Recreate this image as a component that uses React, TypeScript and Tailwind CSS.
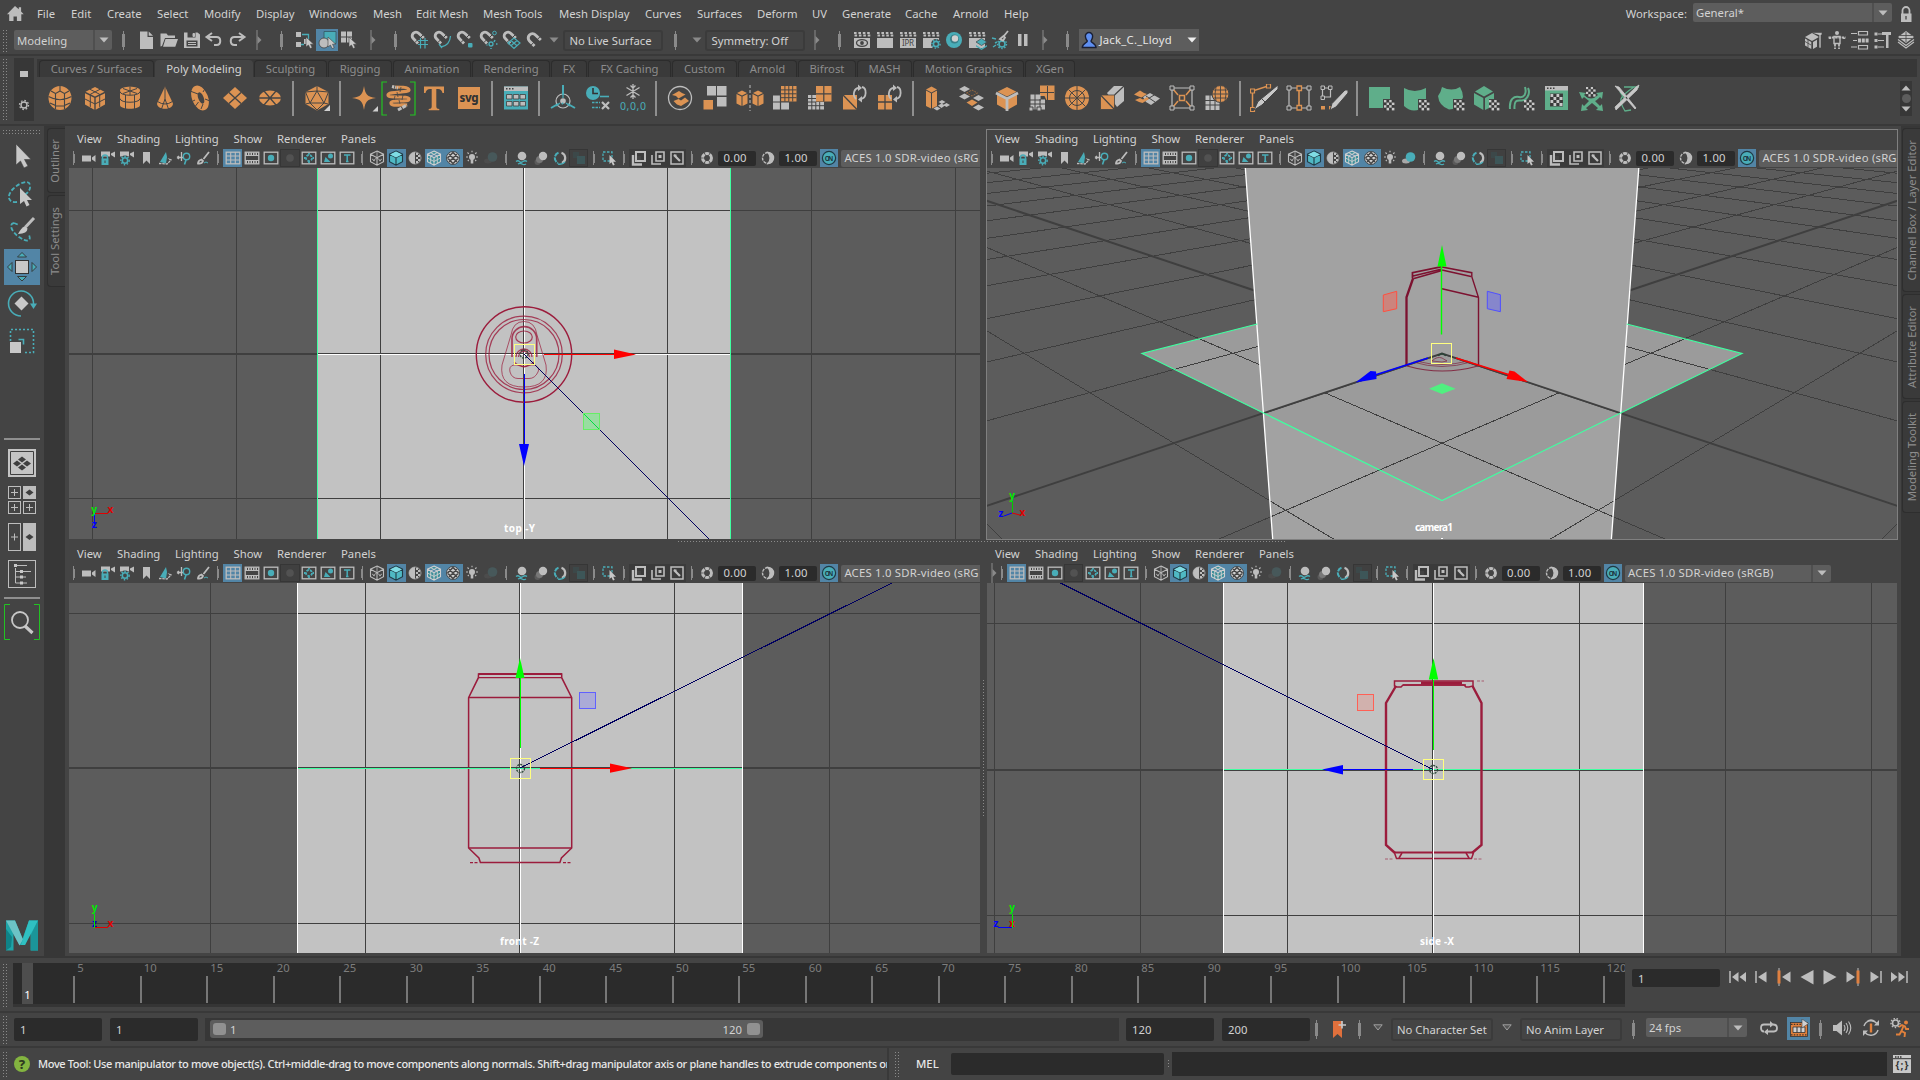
import React from "react";

const W = "#bdbdbd";
const T = "#49adb8";
const O = "#dc9353";
const G = "#5fae8a";
const D = "#444444";
const DK = "#3f3f3f";

type K = { children?: React.ReactNode };

/* ---------- icon frames ---------- */
const I16 = ({ children }: K) => (
  <svg width="16" height="16" viewBox="0 0 16 16" fill="none" className="shrink-0">
    {children}
  </svg>
);
const I20 = ({ children }: K) => (
  <svg width="20" height="20" viewBox="0 0 20 20" fill="none" className="shrink-0">
    {children}
  </svg>
);
const I28 = ({ children }: K) => (
  <svg width="28" height="28" viewBox="0 0 28 28" fill="none" className="shrink-0">
    {children}
  </svg>
);
const I36 = ({ children }: K) => (
  <svg width="36" height="36" viewBox="0 0 36 36" fill="none" className="shrink-0">
    {children}
  </svg>
);

const Checker = ({ x, y, s = 2.6 }: { x: number; y: number; s?: number }) => (
  <>
    {[0, 1, 2, 3].flatMap((r) =>
      [0, 1, 2, 3].map((c) => (
        <rect key={r * 4 + c} x={x + c * s} y={y + r * s} width={s} height={s} fill={(r + c) % 2 ? "#3a3a3a" : "#c8c8c8"} />
      ))
    )}
  </>
);

const GearShape = ({ cx, cy, r, c }: { cx: number; cy: number; r: number; c: string }) => (
  <>
    <circle cx={cx} cy={cy} r={r} stroke={c} strokeWidth={1.6} />
    <circle cx={cx} cy={cy} r={r + 1.5} stroke={c} strokeWidth={1.4} strokeDasharray="1.5 1.6" />
  </>
);

/* ---------- small chrome pieces ---------- */
const Grip = ({ h }: { h: string }) => (
  <div className={"w-[5px] shrink-0 bg-[radial-gradient(circle,#8a8a8a_0.6px,transparent_0.9px)] bg-[length:3px_3px] " + h} />
);
const Sep = ({ w }: { w: string }) => (
  <div className={"relative flex shrink-0 items-center justify-center " + w}>
    <div className="h-[19px] w-px bg-[#8a8a8a]" />
    <div className="absolute h-[13px] w-[3px] bg-[#8a8a8a]" />
  </div>
);
const BarArrow = ({ w }: { w: string }) => (
  <div className={"flex shrink-0 items-center justify-center " + w}>
    <svg width="6" height="20" viewBox="0 0 6 20">
      <path d="M1 0v20" stroke="#8a8a8a" strokeWidth="1" />
      <path d="M1.5 6l4 4-4 4z" fill="#8a8a8a" />
    </svg>
  </div>
);
const Tri = ({ c = "#8a8a8a" }: { c?: string }) => (
  <svg width="10" height="6" viewBox="0 0 10 6">
    <path d="M0.5 0.5h9L5 5.5z" fill={c} />
  </svg>
);

/* ---------- menu bar ---------- */
const menus: [string, string][] = [
  ["File", "w-[34px]"],
  ["Edit", "w-[36px]"],
  ["Create", "w-[50px]"],
  ["Select", "w-[47px]"],
  ["Modify", "w-[52px]"],
  ["Display", "w-[53px]"],
  ["Windows", "w-[64px]"],
  ["Mesh", "w-[43px]"],
  ["Edit Mesh", "w-[67px]"],
  ["Mesh Tools", "w-[76px]"],
  ["Mesh Display", "w-[86px]"],
  ["Curves", "w-[52px]"],
  ["Surfaces", "w-[60px]"],
  ["Deform", "w-[55px]"],
  ["UV", "w-[30px]"],
  ["Generate", "w-[63px]"],
  ["Cache", "w-[48px]"],
  ["Arnold", "w-[51px]"],
  ["Help", "w-[40px]"],
];

const MenuBar = () => (
  <div className="flex h-[27px] items-center text-[#d2d2d2]">
    <div className="w-[37px] pl-[6px]">
      <svg width="19" height="17" viewBox="0 0 19 17">
        <path d="M9 1L1 9.2h2.2V16H7.5v-4.6h3.4V16h4.4V9.2h2.4l-2.6-2.7V2.2h-2.3v2z" fill={W} />
      </svg>
    </div>
    {menus.map(([m, w]) => (
      <div key={m} className={"shrink-0 " + w}>
        {m}
      </div>
    ))}
    <div className="ml-auto flex items-center">
      <span className="mr-[6px]">Workspace:</span>
      <div className="mt-[-2px] flex h-[19px] w-[199px] items-center rounded-[2px] bg-[#5d5d5d]">
        <span className="flex-1 pl-[3px]">General*</span>
        <div className="flex h-full w-[20px] items-center justify-center border-l-2 border-[#4f4f4f]">
          <Tri c={W} />
        </div>
      </div>
      <svg width="28" height="18" viewBox="0 0 28 18" fill="none">
        <path d="M10.5 9V5.5a3.5 3.5 0 0 1 7 0V9" stroke={W} strokeWidth="1.8" />
        <rect x="9" y="8.500" width="10.500" height="8.500" fill={W} />
        <path d="M14 11v3.5" stroke={D} strokeWidth="1.3" />
      </svg>
    </div>
  </div>
);

/* ---------- status line ---------- */
const Magnet = () => (
  <>
    <path d="M9 13.500L4.300 8.600a3.800 3.800 0 0 1 5.400-5.400L14.800 8" stroke={W} strokeWidth="2.900" />
    <path d="M5.700 12.700l3-3M11.200 7.800l3-3" stroke={D} strokeWidth="1" />
  </>
);
const Clap = () => (
  <>
    <rect x="2" y="8" width="16" height="10" fill={W} />
    <path d="M2 3h16M2.5 5.5h16" stroke={W} strokeWidth="1.8" strokeDasharray="2.6 1.8" />
  </>
);
const Cursor = ({ x, y }: { x: number; y: number }) => (
  <path d={`M${x} ${y}v10l2.4-2 1.800 3.600 2-1-1.700-3.400h3.200z`} fill="#c8c8c8" stroke={D} strokeWidth="0.6" />
);

const fileIcons = [
  <I20><path d="M4 1.500h7.500V7H17v12H4zM12.700 1.500L17 5.800h-4.300z" fill={W} /></I20>,
  <I20><path d="M1.500 16.500v-13h6l1.500 2h7v2.500H6l-3 8zM6.500 9H19l-2.700 7.700H4z" fill={W} /></I20>,
  <I20><path d="M2 2.500h13.500l2.500 2V18H2zM5.500 2.500v5h8v-5zM4.500 10.500v6h11v-6z" fill={W} fillRule="evenodd" /><path d="M11 3.500h1.500v3H11zM6 12.500h8M6 14.500h8" fill={W} stroke={W} /></I20>,
  <I20><path d="M8 3L2.500 7 8 11M3 7h9.500c5 0 5 8 0 8H10" stroke={W} strokeWidth="2" /></I20>,
  <I20><path d="M12 3l5.500 4L12 11M17 7H7.500c-5 0-5 8 0 8H10" stroke={W} strokeWidth="2" /></I20>,
];
const magnets = [
  <I20><Magnet /><path d="M9 10.500h10M9 14.500h10M11.500 8v10.500M16 8v10.500" stroke={T} strokeWidth="1.200" /></I20>,
  <I20><Magnet /><path d="M9 17c6-1 9-4 9.500-11M7 14l3 4" stroke={T} strokeWidth="1.300" /></I20>,
  <I20><Magnet /><rect x="13" y="13" width="4.500" height="4.500" rx="1" fill={T} /></I20>,
  <I20><Magnet /><circle cx="16.500" cy="3" r="1.800" stroke={T} /><circle cx="13" cy="14" r="2" stroke={T} strokeWidth="1.300" /><path d="M8.500 15h1M16 12l1-2M18 14h1.500M13 18v1" stroke={T} strokeWidth="1.500" /></I20>,
  <I20><Magnet /><path d="M7 13l6-5 6 5-6 5.500zM10 10.500l6 5.200M16 10.500l-6 5.200" stroke={T} strokeWidth="1.200" /></I20>,
  <I20><path d="M10.500 16L5.500 11a4.200 4.200 0 0 1 6-6l5.300 5" stroke={W} strokeWidth="3" /><path d="M7 15.200l3.200-3.200M13 9.800l3.200-3.200" stroke={D} strokeWidth="1" /></I20>,
];
const renderIcons = [
  <I20><Clap /><ellipse cx="10" cy="13" rx="5.500" ry="3.300" stroke={D} strokeWidth="1.300" /><circle cx="10" cy="13" r="1.900" fill={D} /></I20>,
  <I20><Clap /></I20>,
  <I20><Clap /><text x="4" y="16.300" fontSize="8" fill={D} fontFamily="Noto Sans" textLength="12">IPR</text></I20>,
  <I20><Clap /><circle cx="15" cy="14" r="5" fill={D} /><GearShape cx={15} cy={14} r={2.6} c={T} /></I20>,
  <I20><circle cx="10" cy="10" r="8" fill={T} /><circle cx="10.500" cy="9" r="4.500" fill="#3a7f88" /><circle cx="11" cy="8.500" r="3.200" fill="#d0d0d0" /></I20>,
  <I20><Clap /><path d="M9 12l5.500-3.500L20 12l-5.500 3.500z" fill={T} stroke={D} strokeWidth=".7" /><path d="M9 15l5.500 3.500L20 15v1.500L14.500 20 9 16.500z" fill={T} /></I20>,
  <I20><GearShape cx={12} cy={14} r={3} c={T} /><path d="M18 1l-4.500 5.500M10 9l3.500-3 1.500 1.500-2 3z" stroke={W} strokeWidth="1.800" /><path d="M2 8l4 1M5 13l2-1M3 17l3-2" stroke={T} strokeWidth="1.400" /></I20>,
  <I20><path d="M5 4h3.500v12H5zM11 4h3.500v12H11z" fill={W} /></I20>,
];
const rightIcons = [
  <I20><path d="M1 7l7-4 7 4-7 4zM1 8.500l6.300 3.500v7L1 15.500zM9 12l4-2.200v7L9 19z" fill={W} /><path d="M8 2.500h10V5h-1v13h-2V5" fill={W} stroke={D} strokeWidth=".6" /><path d="M1 11.500l6 3.500M4 9v8" stroke={D} strokeWidth=".8" /></I20>,
  <I20><circle cx="10" cy="3" r="2" fill={W} /><path d="M1.500 7.500h17M3 7.500v1.500M17 7.500v1.500" stroke={W} strokeWidth="2.200" strokeDasharray="2.500 .8" /><path d="M7 6.500h6v7H7z" stroke={W} strokeWidth="1.400" /><path d="M8 14v5M12 14v5" stroke={W} strokeWidth="1.800" strokeDasharray="2.500 1" /></I20>,
  <I20><path d="M1 3.500h6M3 10.500h4M1 17h6" stroke={W} strokeWidth="1.200" /><path d="M8.500 1.500h9v3.500h-9zM8.500 15.500h9V19h-9z" stroke={W} strokeWidth="1.200" /><path d="M8 10.500h11" stroke={W} strokeWidth="4" strokeDasharray="3 .8" /></I20>,
  <I20><path d="M1.500 2.500h3v3h-3zM1.500 9h3v3h-3zM1.500 15.500h3v3h-3z" fill={W} /><path d="M5 4h4M5 10.500h6M5 17h6" stroke={W} strokeWidth="1.200" /><path d="M9 2h9v3h-2.500v13h-2.500V5H9z" fill={W} /></I20>,
  <I20><path d="M10 1l8 6-8 6-8-6z" fill={W} /><path d="M4 5.500h12M4 8.500h12M10 2v10" stroke={D} strokeWidth=".8" /><path d="M2 9.500l8 6 8-6M2 12l8 6 8-6" stroke={W} strokeWidth="1.100" /></I20>,
];

const Cells = ({ items, w }: { items: React.ReactNode[]; w: string }) => (
  <>
    {items.map((it, i) => (
      <div key={i} className={"flex shrink-0 items-center justify-center " + w}>
        {it}
      </div>
    ))}
  </>
);

const StatusLine = () => (
  <div className="flex h-[27px] items-center pb-px text-[#d2d2d2]">
    <div className="w-[14px] pl-[2px]"><Grip h="h-[23px]" /></div>
    <div className="flex h-[20px] w-[98px] items-center rounded-[2px] bg-[#5d5d5d]">
      <span className="flex-1 pt-px pl-[3px]">Modeling</span>
      <div className="flex h-full w-[19px] items-center justify-center border-l-2 border-[#4f4f4f]"><Tri c={W} /></div>
    </div>
    <Sep w="w-[23px]" />
    <Cells items={fileIcons} w="w-[22.7px]" />
    <BarArrow w="w-[22px]" />
    <Sep w="w-[23px]" />
    <div className="flex w-[23px] justify-center">
      <I20><path d="M1 2h5v5H1zM1 12h5v5H1zM9 9h5v5H9z" fill={W} /><path d="M7 4.500h6.500V9M6 14.500h3" stroke={T} strokeWidth="1.300" /><Cursor x={11} y={7} /></I20>
    </div>
    <div className="flex h-[22px] w-[22px] items-center justify-center bg-[#5285a6]">
      <I20><path d="M7 1.500h12v12H7z" fill={T} stroke="#35565f" strokeWidth=".8" /><circle cx="7" cy="13" r="5" fill={W} stroke="#444" strokeWidth=".8" /><Cursor x={11} y={7} /></I20>
    </div>
    <div className="flex w-[23px] justify-center">
      <I20><path d="M1 1.500h5v5H1zM7 1.500h5v5H7zM1 7.500h5v5H1zM7 7.500h5v5H7z" fill={W} /><Cursor x={9} y={7} /></I20>
    </div>
    <BarArrow w="w-[23px]" />
    <Sep w="w-[23px]" />
    <Cells items={magnets} w="w-[23px]" />
    <div className="flex w-[18px] justify-center"><Tri /></div>
    <div className="flex h-[21px] w-[100px] items-center rounded-[3px] border-2 border-[#3b3b3b] pt-px pl-[4px] whitespace-nowrap">No Live Surface</div>
    <Sep w="w-[25px]" />
    <div className="flex w-[17px] justify-center"><Tri /></div>
    <div className="flex h-[21px] w-[100px] items-center rounded-[3px] border-2 border-[#3b3b3b] pt-px pl-[4px] whitespace-nowrap">Symmetry: Off</div>
    <BarArrow w="w-[24px]" />
    <Sep w="w-[21px]" />
    <Cells items={renderIcons} w="w-[23px]" />
    <BarArrow w="w-[22px]" />
    <Sep w="w-[23px]" />
    <div className="flex h-[22px] w-[120px] items-center bg-[#5d5d5d] text-[#e6e6e6]">
      <svg width="20" height="18" viewBox="0 0 20 18" className="shrink-0">
        <path d="M10 1.500a3.600 3.600 0 0 1 3.600 4c0 2-.8 3-1.600 4.500 0 2 5 2 5 6.500H3.300c0-4.500 5-4.500 5-6.500C7.200 8.500 6.400 7.500 6.400 5.500a3.600 3.600 0 0 1 3.600-4z" fill="#5f8ff0" stroke="#1a1f33" strokeWidth="1.400" />
      </svg>
      <span className="flex-1 tracking-[0.25px]">Jack_C._Lloyd</span>
      <div className="flex w-[15px] justify-center"><Tri c="#eeeeee" /></div>
    </div>
    <div className="ml-auto flex pr-[2px]">
      <Cells items={rightIcons} w="w-[23.2px]" />
    </div>
  </div>
);

/* ---------- shelf ---------- */
const Cube = ({ c, g = false }: { c: string; g?: boolean }) => (
  <>
    <path d="M14 3l9.500 4.800L14 12.600 4.500 7.800zM4 9.200l9.300 4.600v12L4 20.600zM24 9.200l-9.300 4.600v12L24 20.600z" fill={c} />
    {g && <path d="M9 5.300l9.700 5v12.600M19 5.300l-9.700 5v12.600M4 15l10 5 10-5" stroke={D} strokeWidth="1" />}
  </>
);
const shelf: (React.ReactNode | "sep")[] = [
  <I28><ellipse cx="14" cy="14" rx="11.500" ry="12" fill={O} /><path d="M14 7l-4.500 2.500V15M14 7l4.500 2.500V15M2.500 12.500Q14 19 25.500 12.500M4 19q10 6 20 0M9.500 15v10M18.500 15v10M9.500 9.500L5 7M18.500 9.500L23 7M14 7V2" stroke={D} strokeWidth="1.100" /></I28>,
  <I28><Cube c={O} g /></I28>,
  <I28><path d="M4 6.500C4 1.500 24 1.500 24 6.500V21c0 5-20 5-20 0z" fill={O} /><path d="M4 7.500c0 5 20 5 20 0M4 14.500c0 5 20 5 20 0M14 3v8M7 4.500l14 5M21 4.500l-14 5M9.500 11v14M18.500 11v14" stroke={D} strokeWidth="1" /></I28>,
  <I28><path d="M14 2.500L22 19.500C22 26.500 6 26.500 6 19.500z" fill={O} /><path d="M14 3v12l-3.500 10M14 15l3.500 10M6.500 17.500q7.500 5 15 0" stroke={D} strokeWidth="1" /></I28>,
  <I28><ellipse cx="14" cy="14" rx="8" ry="13" fill={O} transform="rotate(-22 14 14)" /><ellipse cx="15" cy="14" rx="2.700" ry="6" fill={D} transform="rotate(-22 15 14)" /><path d="M4 7l8 3M9 16l-4 2M17 20l-2 5M17 8l3-5M12.500 18l-3 4M19 15l5 2" stroke={D} strokeWidth="1" /></I28>,
  <I28><path d="M14 3l12 11-12 11L2 14z" fill={O} /><path d="M8 8.500l12 11M20 8.500l-12 11" stroke={D} strokeWidth="1.400" /></I28>,
  <I28><ellipse cx="14" cy="14" rx="11" ry="7.500" fill={O} /><path d="M3 14h22M8 7l12 14M20 7L8 21" stroke={D} strokeWidth="1.300" /></I28>,
  "sep",
  <I28><path d="M14 2l11.500 6v12L14 26.500 2.500 20V8z" fill={O} /><path d="M14 2v5L7 19h14L14 7M2.500 8l11.500-1 11.500 1L21 19l4 1M2.500 8L7 19l-4.500 1M7 19l7 7 7-7" stroke={D} strokeWidth="1" /><path d="M27 21v6h-6z" fill="#d0d0d0" /></I28>,
  "sep",
  <I28><path d="M14 2c1.500 9 3 10.500 12 12-9 1.500-10.500 3-12 12-1.500-9-3-10.500-12-12 9-1.500 10.500-3 12-12z" fill={O} /><path d="M28 22v5.500h-5.500z" fill="#d0d0d0" /></I28>,
  <svg width="35" height="35" viewBox="0 0 35 35" fill="none"><path d="M6 1H1v33h5M29 1h5v33h-5" stroke="#22c322" strokeWidth="1.200" /><path d="M12 6c6 0 16 0 16 3S7 10 7 14s21 0 21 4-18 0-18 4 12 1 16 2" stroke={O} strokeWidth="3.200" /><path d="M11 5.500l6 1.500M17 29l9-5" stroke={W} strokeWidth="3" strokeDasharray="4 1" /><path d="M14 4l-1 5M20 6l-1 5M16 11l1 5M22 14l-1 5M14 15l-1 4M18 19l1 4" stroke={D} strokeWidth=".8" /></svg>,
  <I28><path d="M4 2.500h20V9h-1.500q-.8-4-4.500-4h-1.700v17.500q0 2.500 3 2.500v1.200H8.700V25q3 0 3-2.500V5H10q-3.700 0-4.500 4H4z" fill={O} /></I28>,
  <I28><rect x="3" y="3" width="22" height="22" fill={O} /><text x="4.500" y="17.500" fontSize="11.500" fontWeight="800" fill="#333" fontFamily="Noto Sans" textLength="19">svg</text></I28>,
  "sep",
  <I28><path d="M2 2.500h24V25.500H2z" fill={T} /><path d="M2 2.500h24V7H2z" fill={W} /><path d="M4 4h1.500v1.500H4zM7 4h1.500v1.500H7zM10 4h1.500v1.500H10z" fill={DK} /><path d="M4.500 10.500H10V15H4.500zM11.300 10.500h5.500V15h-5.500zM18 10.500h5.500V15H18zM4.500 17.500H10V22H4.500zM11.300 17.500h5.500V22h-5.500zM18 17.500h5.500V22H18z" fill={W} stroke={DK} strokeWidth=".8" /></I28>,
  "sep",
  <I28><circle cx="14" cy="17" r="7" stroke={W} strokeWidth="1.200" /><circle cx="14" cy="17" r="2.800" fill={W} /><path d="M14 1v10M14 20l-1-1M2 24l7-4M26 24l-7-4" stroke={T} strokeWidth="2" /><path d="M14 14l0-4M11 19l-4 3M17 19l4 3" stroke={T} strokeWidth="1.200" /></I28>,
  <I28><circle cx="9" cy="9" r="7" fill={T} /><path d="M9 4v5.500h5" stroke="#333" strokeWidth="1.600" /><path d="M16 12.500h9" stroke={T} strokeWidth="1.600" /><path d="M8 18.500h8M8 23.500h8" stroke={T} strokeWidth="1.500" strokeDasharray="2.500 1" /><path d="M18 18l7 7M25 18l-7 7" stroke={W} strokeWidth="2.200" /></I28>,
  <I28><path d="M14 0v15M7.500 3.500l13 8M20.500 3.500l-13 8M11.500 1.500L14 4l2.500-2.500M11.500 13.500L14 11l2.500 2.500" stroke={W} strokeWidth="1.300" /><text x="1" y="25.500" fontSize="10.500" fill={T} fontFamily="Noto Sans" textLength="26">0,0,0</text></I28>,
  "sep",
  <I28><circle cx="14" cy="14" r="11.500" stroke={W} strokeWidth="1.300" /><path d="M6 11l7-4 3 2 3.500 1.500-7 4-2.500-2.500zM7.500 17l5-2 2.500 1.500 4-3 4 3.500-8 5-4-1.500z" fill={O} /></I28>,
  <I28><path d="M6 2h9v9.500H6zM16 2h9.500v9.500H16zM16 13h9.500v9.500H16z" fill={W} /><path d="M2.500 16H12v9.500H2.500z" fill={O} /></I28>,
  <I28><path d="M14 1v26" stroke={W} strokeWidth="1" strokeDasharray="3 2" /><path d="M1 9l5-2.500L11 9l-5 2.500zM0.500 10L5.500 12.500v9.500l-5-2.500zM11.500 10l-5 2.500v9.500l5-2.500zM17 9l5-2.500L27 9l-5 2.500zM16.500 10l5 2.500v9.500l-5-2.500zM27.500 10l-5 2.500v9.500l5-2.500z" fill={O} /></I28>,
  <I28><path d="M10 2h15.500v15.500H10z" fill={O} /><path d="M10 5.900h15.500M10 9.800h15.500M10 13.700h15.500M13.900 2v15.500M17.800 2v15.500M21.700 2v15.500" stroke={D} strokeWidth="1" /><path d="M2 11.500h8v6.500h8v7.500H2z" fill={W} /><path d="M9.500 11v15M2 18h16" stroke={D} strokeWidth="1.200" /></I28>,
  <I28><path d="M10 2h15.500v15.500H10z" fill={O} /><path d="M10 9.800h15.500M17.800 2v15.500" stroke={D} strokeWidth="1.200" /><path d="M2 11h8v7h8v7.500H2z" fill={W} /><path d="M2 14.500h8M2 18h8M2 21.700h16M5.800 11v15M9.800 18v8M13.700 18v8" stroke={D} strokeWidth="1" /></I28>,
  <I28><path d="M2 11h14v14.500H2z" fill={O} /><path d="M2 11l14 14.500" stroke={D} strokeWidth="1.300" /><path d="M15 15c-4-4-2-11 3-11M21 3c5 1 5 11-1 12" stroke={W} strokeWidth="1.800" /><path d="M17 0.500l4 3.500-4 3zM21 12l-4 3.500 4 3z" fill={W} /></I28>,
  <I28><path d="M2 11h14v14.500H2z" fill={O} /><path d="M2 18h14M9 11v15" stroke={D} strokeWidth="1.300" /><path d="M15 15c-4-4-2-11 3-11M21 3c5 1 5 11-1 12" stroke={W} strokeWidth="1.800" /><path d="M17 0.500l4 3.500-4 3zM21 12l-4 3.500 4 3z" fill={W} /></I28>,
  "sep",
  <I28><path d="M3 5.500l5.500-3L14 5.500l-5.500 3zM3 6.500l5 2.700V24.500L3 22zM14 6.500l-5 2.700V24.500l5-2.500z" fill={O} /><path d="M15.500 18l3.500-2 3.500 2-3.500 2zM20 21l3.500-2 3.500 2-3.500 2zM10.500 24.500l3.500-2 3.500 2-3.500 2zM15 21.500l3.500-2 3.500 2-3.500 2.500z" fill={W} /></I28>,
  <I28><path d="M1 5l5.500-3L12 5l-5.500 3zM1 12.500l5.500-3 5.500 3-5.500 3zM15 14l5.500-3 5.500 3-5.500 3zM15 23.500l5.500-3 5.500 3-5.500 3z" fill={W} /><path d="M8.500 18.500l5.500-3 5.500 3-5.500 3.500z" fill={O} /><path d="M8.500 9l5.500-3 5.500 3-5.500 3z" stroke="#9a6a40" strokeDasharray="2 1" /></I28>,
  <I28><Cube c={O} /><path d="M3 9l11 5.700L25 9M14 14v13" stroke={W} strokeWidth="2.800" /></I28>,
  <I28><path d="M12 1.500h14.500V16h-8l-2-4h-4.500z" fill={O} /><path d="M19.500 2v14M12 8.500h14" stroke={D} /><path d="M2.500 10.500h10v5H17v10H2.500z" fill={W} /><path d="M2 16h11M2 20h15M7 10v16M12 15v11" stroke={D} strokeWidth="1" /><path d="M1 23h4v4H1zM9 23h4v4H9z" fill={W} stroke={D} /></I28>,
  <I28><circle cx="14" cy="14" r="12" fill={O} /><circle cx="14" cy="14" r="7.500" stroke={D} /><path d="M14 2v24M2 14h24M5.500 5.500l17 17M22.500 5.500l-17 17" stroke={D} strokeWidth="1" /></I28>,
  <I28><path d="M9 9l7-7h10v15l-7 6z" fill={W} /><path d="M2.500 11h14v14.500h-14z" fill={O} stroke={D} strokeWidth=".8" /><path d="M2.500 11l14 14.500M16.500 11L26 2" stroke={D} strokeWidth="1.200" /></I28>,
  <I28><path d="M10 13l7-4 10 5.500-9 6.500-5-3z" fill={W} /><path d="M22 10.500L13 16M13 12l9 6" stroke={D} strokeWidth="1" /><path d="M1 10.500l6-4 4 2.500 3 1-5.500 3.500-3-1zM2 16l5-2 3 1.500 4-2.500 2 2-6.500 4-3.500-1z" fill={O} /></I28>,
  <I28><path d="M4 4h20v20H4z" stroke={W} strokeWidth="1.200" /><path d="M5 5l5 6M23 5l-5 6M5 23l5-6M23 23l-5-6" stroke={O} strokeWidth="1.500" /><path d="M11.500 11.500h5v5h-5z" stroke={O} strokeWidth="1.500" /><path d="M2 2h4v4H2zM22 2h4v4h-4zM2 22h4v4H2zM22 22h4v4h-4z" fill={D} stroke={W} /></I28>,
  <I28><path d="M2.500 11.500h14V26h-14z" fill={W} /><path d="M2 16.500h15M2 21h15M7 11v15M12 11v15" stroke={D} strokeWidth="1" /><circle cx="17.500" cy="10" r="8.500" fill={O} stroke={D} /><path d="M9 10h17M17.500 1.500v17M13 3q-2 7 0 14M22 3q2 7 0 14M10.500 6h14M10.500 14h14" stroke={D} strokeWidth=".9" /></I28>,
  "sep",
  <I28><path d="M2.500 25V7L18 2" stroke={O} strokeWidth="1.500" /><path d="M.5 5h4v4h-4zM16.500 0h4v4h-4zM.5 23.500h4v4h-4z" fill={D} stroke={O} strokeWidth="1.200" /><path d="M28 1v4L12 21l-8 5 4-8.500z" fill="#c8c8c8" stroke={D} /><path d="M12 15l3 3" stroke={D} /></I28>,
  <I28><path d="M4 4h20v20H4z" stroke={W} strokeWidth="1.200" /><path d="M14 4v20" stroke={O} strokeWidth="1.600" /><path d="M2 2h4v4H2zM22 2h4v4h-4zM2 22h4v4H2zM22 22h4v4h-4z" fill={D} stroke={W} /><path d="M12 2h4.500v4.500H12zM12 21.500h4.500V26H12z" fill={D} stroke={O} strokeWidth="1.300" /></I28>,
  <I28><path d="M2.500 4h8v9h-8z" stroke={W} strokeWidth="1.200" /><path d="M1 2h3.500v3.500H1zM8.500 2H12v3.500H8.500zM1 12h3.500v3.500H1z" fill={D} stroke={W} /><path d="M1 22h4v3.500H1zM9 22h3v3.500H9z" fill={O} /><path d="M28 6v3L16 23l-6 3 2-6.500L25 6z" fill="#c8c8c8" stroke={D} /></I28>,
  "sep",
  <I28><path d="M2 3h21v21H2z" fill={G} /><path d="M16 15h12v12H16z" fill={D} /><Checker x={17} y={16} /></I28>,
  <I28><path d="M2 4q10.500 6 22 0v16q-11 12-22 2z" fill={G} /><path d="M16 15h12v12H16z" fill={D} /><Checker x={17} y={16} /></I28>,
  <I28><path d="M5 3q10 5 18 0 3 5 3 10-4 12-14 12.500Q2 22 1 12 4 8 5 3z" fill={G} /><path d="M16 15h12v12H16z" fill={D} /><Checker x={17} y={16} /></I28>,
  <I28><path d="M12 2l9 5.500-9 5L3 7.500zM2 9l9.300 5v12L2 20.500zM22 9l-9 5v12l4-2V15h5z" fill={G} /><Checker x={17} y={16} /></I28>,
  <I28><path d="M3 25C2 15 7 12 12 13s8-3 6-10M7.500 25C7 17 9 16 14 16.500s10-6 7-12.500" stroke={G} strokeWidth="2" /><Checker x={17} y={16} /></I28>,
  <I28><path d="M3 2h23v24H3z" fill={G} /><path d="M3 2h23v4.500H3z" fill={W} /><path d="M5 3.500h1.500V5H5zM8 3.500h1.500V5H8zM11 3.500h1.500V5H11z" fill={DK} /><rect x="8" y="9.500" width="13" height="13" fill={D} /><Checker x={8.5} y={10} s={3} /></I28>,
  <I28><path d="M2 8l7 1-2 2q7 7 14 0l-2-2 7-1-1 7-2-2q-4 4-5 4l5 5 2-2 1 7-7-1 2-2-6-5-6 5 2 2-7 1 1-7 2 2 5-5-5-4-2 2z" fill={G} /><Checker x={9} y={3} s={2.4} /></I28>,
  <I28><path d="M12 3h15M22 3q-12 8-13 12t4 12l6-1M8 8l5 8" stroke={G} strokeWidth="1.300" /><path d="M3 2l4 1 17 21-1 1zM27 1l-3 2L3 23l1 3L25 6z" fill="#c8c8c8" stroke="#c8c8c8" strokeWidth=".8" /></I28>,
];

const shelfTabs: [string, string][] = [
  ["Curves / Surfaces", "w-[115px] mr-[1px]"],
  ["Poly Modeling", "w-[98px] mr-[1px]"],
  ["Sculpting", "w-[73px] mr-[1px]"],
  ["Rigging", "w-[64px] mr-[1px]"],
  ["Animation", "w-[78px] mr-[1px]"],
  ["Rendering", "w-[78px] mr-[1px]"],
  ["FX", "w-[36px] mr-[1px]"],
  ["FX Caching", "w-[83px] mr-[1px]"],
  ["Custom", "w-[65px] mr-[1px]"],
  ["Arnold", "w-[59px] mr-[1px]"],
  ["Bifrost", "w-[58px] mr-[1px]"],
  ["MASH", "w-[55px] mr-[1px]"],
  ["Motion Graphics", "w-[111px] mr-[1px]"],
  ["XGen", "w-[50px] mr-[1px]"],
];

const Shelf = () => (
  <div className="flex h-[68px] pt-[2px]">
    <div className="w-[14px] pl-[2px]"><Grip h="h-[62px]" /></div>
    <div className="flex h-[63px] w-[20px] flex-col items-center bg-[#373737]">
      <div className="mt-[13px] h-[6px] w-[8px] bg-[#c0c0c0]" />
      <svg width="12" height="12" viewBox="0 0 12 12" fill="none" className="mt-[22px]">
        <circle cx="6" cy="6" r="3" stroke={W} strokeWidth="1.400" />
        <circle cx="6" cy="6" r="4.500" stroke={W} strokeWidth="1.300" strokeDasharray="1.600 1.900" />
      </svg>
    </div>
    <div className="ml-[3px] flex w-[1880px] flex-col pt-px">
      <div className="flex h-[18px] bg-[#373737] pl-[2px] text-[#8c8c8c]">
        {shelfTabs.map(([t, w]) => (
          <div
            key={t}
            className={
              "mt-[1px] flex shrink-0 items-center justify-center rounded-t-[4px] whitespace-nowrap " +
              (t === "Poly Modeling" ? "bg-[#444444] text-[#d2d2d2] " : "border border-b-0 border-[#2c2c2c] bg-[#3a3a3a] ") +
              w
            }
          >
            {t}
          </div>
        ))}
      </div>
      <div className="flex h-[42px] items-center pl-[5px]">
        {shelf.map((s, i) =>
          s === "sep" ? (
            <div key={i} className="flex w-[12px] shrink-0 justify-center">
              <div className="h-[35px] w-[2px] bg-[#8f8f8f]" />
            </div>
          ) : (
            <div key={i} className="flex w-[35px] shrink-0 items-center justify-center">{s}</div>
          )
        )}
        <div className="mr-[5px] ml-auto flex h-[35px] w-[12px] flex-col items-center justify-between bg-[#373737] py-[4px]">
          <svg width="10" height="6" viewBox="0 0 10 6"><path d="M.5 5.500h9L5 .5z" fill={W} /></svg>
          <div className="h-[9px] w-[9px] rounded-full bg-[#5d5d5d]" />
          <Tri c={W} />
        </div>
      </div>
    </div>
  </div>
);

/* ---------- viewport toolbar ---------- */
const Cam = () => <path d="M1 5.500h9v6H1zM11 7.500L14.500 5v7L11 9.500z" fill={W} />;
const Frame = () => <rect x="1.200" y="2.200" width="13.600" height="11.600" stroke={W} strokeWidth="1.300" />;
const camIcons = [
  <I16><Cam /></I16>,
  <I16><path d="M1 1.500h9v5H1zM11 3.500L15 1.500v6L11 5z" fill={W} /><path d="M2.500 9V7.500a2.500 2.500 0 0 1 5 0V9" stroke={T} strokeWidth="1.400" /><rect x="1.500" y="8.500" width="7" height="6.500" fill={T} /><path d="M5 10.500v2.500" stroke={D} /></I16>,
  <I16><path d="M1 1.500h9v5H1zM11 3.500L15 1.500v6L11 5z" fill={W} /><circle cx="6" cy="10.500" r="5" fill={D} /><GearShape cx={6} cy={10.5} r={2.7} c={T} /></I16>,
  <I16><path d="M5 2h7v12L8.500 10.500 5 14z" fill={W} /></I16>,
  <I16><path d="M3 12L9 2l1 5-1 6.500z" fill={T} /><path d="M2 13.500l8 .5 4-4-3-1.500" stroke={W} strokeWidth="1.300" strokeDasharray="2.500 .8" /></I16>,
  <I16><path d="M1 7.500h7M5.500 2v9M1 7.500l2-1.500M1 7.500l2 1.500" stroke={W} strokeWidth="1.300" /><circle cx="10.500" cy="6.500" r="3.200" stroke={T} strokeWidth="1.400" /><path d="M10 10l-1.500 4.500" stroke={T} strokeWidth="1.600" /></I16>,
  <I16><path d="M14 2L8.500 9M3 13.500q0-3 3.500-4l1.500 1.500q-1 3-5 2.500z" stroke={W} strokeWidth="1.800" /><path d="M9 13q2-2 4 0" stroke={T} /></I16>,
];
const CubeS = ({ a, b }: { a: string; b: string }) => (
  <path d="M8 1l6.500 3.200v7.500L8 15.200l-6.500-3.500V4.200zM1.500 4.200L8 7.700l6.500-3.500M8 7.700v7.500" fill={a} stroke={b} strokeWidth="1.100" />
);
const frameIcons: [React.ReactNode, string][] = [
  [<I16><Frame /><path d="M1 6h14M1 10h14M5.700 2v12M10.300 2v12" stroke={W} strokeWidth="1.100" /></I16>, "on"],
  [<I16><Frame /><path d="M1.500 3.700h13M1.500 12.300h13" stroke={W} strokeWidth="2.400" strokeDasharray="1.500 1" /><path d="M1 5.500h14M1 10.500h14" stroke={W} /></I16>, ""],
  [<I16><Frame /><circle cx="8" cy="8" r="3.200" fill={T} /></I16>, ""],
  [<I16><circle cx="8" cy="8" r="3.800" fill="#525252" /></I16>, "dis"],
  [<I16><Frame /><circle cx="8" cy="8" r="3" stroke={T} strokeWidth="1.800" strokeDasharray="2.500 1.200" /><path d="M3 8h1.500M11.500 8H13M8 3v1.500M8 11.500V13" stroke={T} strokeWidth="1.800" /></I16>, ""],
  [<I16><Frame /><path d="M4 12l1.500-5 5 5z" fill={T} /><circle cx="10.500" cy="6" r="2.500" fill={T} /></I16>, ""],
  [<I16><Frame /><path d="M5 5h6.500M8.200 5v6.500M7 11.500h2.500" stroke={T} strokeWidth="1.500" /></I16>, ""],
];
const shadeIcons: [React.ReactNode, string][] = [
  [<I16><CubeS a="none" b={W} /><path d="M8 1v6.500L4 11M8 8l4 3M3 9l3 2M10 11l3-2" stroke={W} strokeWidth=".8" /></I16>, ""],
  [<I16><CubeS a="#4fb9c4" b="#203b45" /><path d="M8 1.500l6 3-6 3-6-3z" fill="#7fdce4" /></I16>, "on"],
  [<I16><path d="M8 2a6 6 0 0 0 0 12z" fill={W} /><path d="M9 3h2v2H9zM11 5h2v2h-2zM9 7h2v2H9zM11 9h2v2h-2zM9 11h2v2H9z" fill={W} /><circle cx="8" cy="8" r="6" stroke={W} strokeWidth=".7" /></I16>, ""],
  [<I16><CubeS a="#3d8f9a" b="#d0d0d0" /><path d="M4.700 6v7.500M11.300 6v7.500M1.500 8L8 11.500 14.500 8M4.700 2.700l6.500 3.300M11.300 2.700L4.700 6" stroke="#d0d0d0" strokeWidth=".9" /></I16>, "on"],
  [<I16><circle cx="8" cy="8" r="6.500" fill="#d0d0d0" stroke="#333" strokeWidth=".8" /><path d="M4 4l8 8M8 2.500l5.500 5.500M2.500 8L8 13.500M12 4l-8 8M8 2.500L2.500 8M13.500 8L8 13.500" stroke="#444" strokeWidth="1.500" /></I16>, "on"],
  [<I16><circle cx="8" cy="7" r="3" fill={W} /><path d="M8 8v5.500" stroke={W} strokeWidth="2.600" /><path d="M8 .8v1.500M2 7h2M12 7h2M3.500 2.500l1.300 1.300M12.500 2.500l-1.300 1.300M3.800 11l1-1M12.200 11l-1-1" stroke={W} strokeWidth="1.100" /></I16>, ""],
];
const effectIcons: [React.ReactNode, string][] = [
  [<I16><circle cx="8" cy="6" r="4.300" fill={W} /><path d="M2 11.500q2-1.500 3.500 0t3.500 0 4 0M4 14q2-1.300 4 0t4 0" stroke={T} strokeWidth="1.300" /></I16>, ""],
  [<I16><circle cx="4.500" cy="12" r="3" fill="#5a5a5a" /><circle cx="6.500" cy="9.500" r="3.500" fill="#777" /><circle cx="10" cy="6" r="4.200" fill={W} /></I16>, ""],
  [<I16><path d="M6.500 2.800A5.500 5.500 0 0 0 6 13" stroke={T} strokeWidth="2" strokeDasharray="5 1" /><path d="M9.500 2.800A5.500 5.500 0 0 1 10 13" stroke={W} strokeWidth="2.200" /><path d="M6 14q4 1 7-2" stroke={T} strokeWidth="1.500" /></I16>, ""],
  [<I16><path d="M2 2h6v6H2z" fill="#38505280" /><path d="M6 6h8v8H6z" fill="#3d5658" /></I16>, "dis"],
];

const PBtn = ({ k, children }: { k: string; children: React.ReactNode }) => (
  <div
    className={
      "flex h-[18px] w-[19.05px] shrink-0 items-center justify-center " +
      (k === "on" ? "bg-[#5285a6]" : k === "dis" ? "border border-[#363636] bg-[#404040]" : k === "box" ? "bg-[#3b3b3b]" : "")
    }
  >
    {children}
  </div>
);
const PSep = () => (
  <div className="relative flex w-[11px] shrink-0 items-center justify-center">
    <div className="h-[14px] w-px bg-[#8a8a8a]" />
    <div className="absolute h-[9px] w-[2px] bg-[#8a8a8a]" />
  </div>
);

const PanelBar = ({ cam, lit, full }: { cam: boolean; lit: boolean; full: boolean }) => (
  <div className="flex h-[20px] w-full items-start overflow-hidden pt-[1px] text-[#d2d2d2]">
    <div className="flex h-[18px] w-full items-center">
      {cam ? (
        <>
          <div className="ml-[-1px]"><PSep /></div>
          {camIcons.map((c, i) => <PBtn key={i} k="">{c}</PBtn>)}
        </>
      ) : (
        <div className="w-[9px] shrink-0 pl-[4px]"><BarArrow w="w-[6px]" /></div>
      )}
      <PSep />
      {frameIcons.map(([c, k], i) => <PBtn key={i} k={k}>{c}</PBtn>)}
      <PSep />
      {shadeIcons.map(([c, k], i) => <PBtn key={i} k={k}>{c}</PBtn>)}
      <PBtn k="">
        <I16>
          <ellipse cx="5" cy="11" rx="4" ry="2.500" fill={lit ? "#a8a8a8" : "#4c4c4c"} />
          <circle cx="9.500" cy="7" r="4.800" fill={lit ? T : "#47585a"} />
        </I16>
      </PBtn>
      <PSep />
      {effectIcons.map(([c, k], i) => <PBtn key={i} k={k}>{c}</PBtn>)}
      <PSep />
      <PBtn k="">
        <I16><rect x="2" y="2" width="9" height="9" stroke={T} strokeWidth="1.300" strokeDasharray="2.500 1.500" /><path d="M8.500 5v9l2-1.700L12 15.500l1.700-.8-1.500-3H15z" fill="#c8c8c8" /></I16>
      </PBtn>
      <PSep />
      <PBtn k="box"><I16><path d="M5 2h9v9H5z" stroke={W} strokeWidth="2" /><path d="M2 5v9.500h9" stroke={W} strokeWidth="2.400" /><path d="M6 6h4v4H6z" fill={D} /></I16></PBtn>
      <PBtn k="box"><I16><path d="M6 2h8v9H6z" stroke={W} strokeWidth="1.600" /><path d="M2 5v9h9" stroke={W} strokeWidth="1.600" /><path d="M8.500 5h3v3h-3z" fill={W} /></I16></PBtn>
      <PBtn k="box"><I16><rect x="2" y="2" width="12" height="12" stroke={W} strokeWidth="1.500" /><path d="M5 5l6 6" stroke={W} strokeWidth="2.200" /><path d="M4.500 4.500h3v3z" fill={W} /></I16></PBtn>
      <PSep />
      <PBtn k="">
        <I16><circle cx="8" cy="8" r="4.500" stroke={W} strokeWidth="3" strokeDasharray="4 .7" /></I16>
      </PBtn>
      <div className="ml-[2px] flex h-[15px] w-[38px] shrink-0 items-center rounded-[2px] bg-[#2b2b2b] pl-[5px] tracking-[0.25px]">0.00</div>
      <div className="flex w-[23px] shrink-0 justify-center">
        <I16><path d="M8 2.500a5.500 5.500 0 0 0 0 11" stroke={W} strokeWidth="1.400" strokeDasharray="3 1" /><path d="M8 2.500a5.500 5.500 0 0 1 0 11 8 8 0 0 0 0-11z" fill={W} stroke={W} strokeWidth="1.500" /></I16>
      </div>
      <div className="flex h-[15px] w-[38px] shrink-0 items-center rounded-[2px] bg-[#2b2b2b] pl-[5px] tracking-[0.25px]">1.00</div>
      <div className="ml-[3px] flex h-[18px] w-[18px] shrink-0 items-center justify-center bg-[#5285a6]">
        <I16><circle cx="8" cy="8" r="6.600" fill={T} stroke="#1f3a44" strokeWidth="1.200" /><text x="3.700" y="10.600" fontSize="6.500" fontWeight="700" fill="#1f3a44" fontFamily="Noto Sans" textLength="8.600">ON</text></I16>
      </div>
      {full ? (
        <div className="ml-[3px] flex h-[17px] w-[206px] shrink-0 items-center rounded-[2px] bg-[#5d5d5d]">
          <span className="flex-1 pl-[3px] tracking-[0.22px] whitespace-nowrap">ACES 1.0 SDR-video (sRGB)</span>
          <div className="flex h-full w-[20px] items-center justify-center border-l-2 border-[#4f4f4f]"><Tri c={W} /></div>
        </div>
      ) : (
        <div className="ml-[3px] flex h-[17px] min-w-0 flex-1 items-center overflow-hidden rounded-l-[2px] bg-[#5d5d5d] pl-[3px] tracking-[0.22px] whitespace-nowrap">
          ACES 1.0 SDR-video (sRG
        </div>
      )}
    </div>
  </div>
);

const PanelMenu = () => (
  <div className="flex h-[18px] items-center pl-[8px] text-[#d2d2d2]">
    <span className="w-[40px]">View</span>
    <span className="w-[58px]">Shading</span>
    <span className="w-[58.5px]">Lighting</span>
    <span className="w-[43.5px]">Show</span>
    <span className="w-[64px]">Renderer</span>
    <span>Panels</span>
  </div>
);

const Panel = ({ active, cam = true, lit = false, full = false, children }: K & { active?: boolean; cam?: boolean; lit?: boolean; full?: boolean }) => (
  <div className={"flex flex-col overflow-hidden border " + (active ? "border-[#808080]" : "border-transparent")}>
    <PanelMenu />
    <PanelBar cam={cam} lit={lit} full={full} />
    {children}
  </div>
);

/* ---------- viewports ---------- */
const CAN = "#9b1c3c";
const GREEN = "#3fffa0";
const NAVY = "#00005f";

const VL = ({ x, y0, y1, c = DK, w = 1 }: { x: number; y0: number; y1: number; c?: string; w?: number }) => (
  <rect x={x} y={y0} width={w} height={y1 - y0} fill={c} />
);
const HL = ({ y, x0, x1, c = DK, w = 1 }: { y: number; x0: number; x1: number; c?: string; w?: number }) => (
  <rect x={x0} y={y} width={x1 - x0} height={w} fill={c} />
);
const Label = ({ x, y, w, children }: { x: number; y: number; w: number; children: string }) => (
  <text x={x} y={y} fontSize="10" fontWeight="700" fill="#ffffff" fontFamily="Noto Sans, sans-serif" textLength={w}>
    {children}
  </text>
);
const Ax = ({ x, y, c, children }: { x: number; y: number; c: string; children: string }) => (
  <text x={x} y={y} fontSize="10" fontWeight="700" fill={c} textAnchor="middle" fontFamily="Noto Sans, sans-serif">
    {children}
  </text>
);

const TopView = () => (
  <svg width="911" height="371" viewBox="69 168 911 371" fill="none">
    <rect x="69" y="168" width="911" height="371" fill="#5c5c5c" />
    <HL y={353} x0={69} x1={980} w={2} />
    <rect x="317" y="168" width="414" height="371" fill="#c2c2c2" />
    {[92, 236, 380, 667, 811, 955].map((x) => <VL key={x} x={x} y0={168} y1={539} />)}
    {[210, 498].map((y) => <HL key={y} y={y} x0={69} x1={980} />)}
    <VL x={317} y0={168} y1={539} c={GREEN} />
    <VL x={730} y0={168} y1={539} c={GREEN} />
    <HL y={353} x0={318} x1={730} />
    <HL y={354} x0={318} x1={730} c="#ffffff" />
    <VL x={523} y0={168} y1={539} />
    <VL x={524} y0={168} y1={539} c="#ffffff" />
    <g stroke={CAN}>
      <circle cx="524" cy="354.500" r="47.700" strokeWidth="1.400" />
      <circle cx="524" cy="354.500" r="38.300" strokeWidth="1.200" strokeOpacity=".8" />
      <circle cx="524" cy="354.500" r="35" strokeWidth="1.200" strokeOpacity=".8" />
      <path d="M512 357V339a12.300 12.300 0 0 1 24.700 0v18" strokeWidth="1.700" strokeOpacity=".8" />
      <path d="M511 335q2-13.500 13-13.500t13 13.500l9 30q3 22-22 22t-22-22z" strokeOpacity=".7" />
      <ellipse cx="524" cy="337" rx="8.300" ry="6" strokeWidth="1.200" strokeOpacity=".8" />
      <path d="M514 365h6q4 4 8 0h7q5 3 3 7-3 6.500-9 6.500h-11q-6 0-8-6.500-1.500-6 4-7z" strokeOpacity=".7" />
      <path d="M516 357a8 8 0 0 1 16 0M518.500 357a5.500 6 0 0 1 11 0M514 362q10 9 20 0" strokeOpacity=".8" strokeWidth="1.300" />
    </g>
    <circle cx="524" cy="354" r="4" stroke="#2d4a3a" strokeWidth="1.300" strokeDasharray="2 1" />
    <path d="M524 354L709 539" stroke={NAVY} strokeWidth="1.100" shapeRendering="crispEdges" />
    <rect x="583.500" y="413.500" width="16" height="16" fill="#66ff7a" fillOpacity=".45" stroke="#66ee66" />
    <path d="M584 414l15 15" stroke="#00dd44" />
    <rect x="514.500" y="344.500" width="20" height="20" stroke="#ffff80" />
    <HL y={354} x0={544} x1={614} c="#ff0000" />
    <path d="M614 349.500l22 5-22 4.500z" fill="#ff0000" />
    <VL x={524} y0={374} y1={444} c="#0000ff" />
    <path d="M519 444l5 22 5-22z" fill="#0000ff" />
    <Label x={504} y={531.5} w={31}>top -Y</Label>
    <HL y={513} x0={95} x1={108} c="#e00000" />
    <VL x={94} y0={513} y1={524} c="#0000ff" />
    <Ax x={94} y={512.5} c="#00ee00">y</Ax>
    <Ax x={110.5} y={512.5} c="#e00000">x</Ax>
    <Ax x={94.5} y={527.5} c="#0000ff">z</Ax>
  </svg>
);

/* Ground-plane projection for the perspective camera. */
const HALF = 1.436;
const project = (x: number, z: number): [number, number] => {
  const a = (x + z) / (2 * HALF);
  const b = (x - z) / (2 * HALF);
  const d = 1 - 0.3172 * a;
  return [1442 + (300 * b) / d, (353.3 - 11.56 * a) / d];
};
const gridPath = (i: number): string => {
  const max = Math.min(12, 8.5 - i);
  const p = [project(i, -12), project(i, max), project(-12, i), project(max, i)];
  const f = p.map(([x, y]) => x.toFixed(1) + " " + y.toFixed(1));
  return `M${f[0]}L${f[1]}M${f[2]}L${f[3]}`;
};
const gridIdx = Array.from({ length: 25 }, (_, i) => i - 12);

const CamView = () => (
  <svg width="910" height="371" viewBox="987 168 910 371" fill="none">
    <rect x="987" y="168" width="910" height="371" fill="#5c5c5c" />
    <path d="M1245.300 168H1638.800L1611.400 539H1272.700z" fill="#a2a2a2" />
    <path d="M1142 353.500L1442 277l300 76.500-300 147z" fill="#9b9b9b" />
    <g stroke={DK} strokeWidth="1" shapeRendering="crispEdges">
      {gridIdx.filter((i) => i !== 0).map((i) => <path key={i} d={gridPath(i)} />)}
    </g>
    <path d={gridPath(0)} stroke={DK} strokeWidth="2" />
    <path d="M1245.300 168H1638.800L1620.500 413 1442 353.500 1263.700 413z" fill="#a2a2a2" />
    <path d="M1263.700 413L1442 353.500l178.500 59.500" stroke={DK} strokeWidth="1.800" />
    <path d="M1245.300 168L1272.700 539M1638.800 168L1611.400 539" stroke="#ffffff" strokeWidth="1.300" />
    <path d="M1257.300 324L1142 353.500l300 147 300-147-115.300-29.500" stroke={GREEN} strokeWidth="1.200" />
    <g stroke="#7c1230">
      <path d="M1406.500 366V297.300L1413.200 278" strokeWidth="2.300" />
      <path d="M1412.500 278v-5.300L1442 266.700M1414 278.500l28-8M1413 276l29-7" strokeWidth="1.800" />
      <path d="M1442 267l29.800 5.700v4L1478.500 297.500V365M1442 270l29 6.500M1442 288.700l36.500 8.600" strokeWidth="1.400" />
      <path d="M1407 366q35 10 71 0" strokeWidth="1.100" strokeOpacity=".8" />
      <path d="M1413 362q29 9 58 0M1416 361q26 7 52 0M1432 361q5-5 10-3l5 3-5 1z" strokeWidth="1" strokeOpacity=".6" />
    </g>
    <path d="M1441.500 334.500V266" stroke="#00ff00" strokeWidth="1.400" />
    <path d="M1442 245l-4.500 21.500h9z" fill="#00ff00" />
    <path d="M1383.300 295l13.400-3.700v17.400l-13.400 3z" fill="#ff6050" fillOpacity=".45" stroke="#ff5040" />
    <path d="M1487.300 291.300l13.100 3.400v17l-13.100-3z" fill="#6464ff" fillOpacity=".45" stroke="#5050ff" />
    <path d="M1429 388.700l13-5.400 13.500 5.400-13.500 5.300z" fill="#50f080" />
    <path d="M1438 355.500l4-2 4 2" stroke="#2c4438" strokeWidth="1.500" />
    <rect x="1431.500" y="343.500" width="20" height="20" stroke="#ffff80" />
    <path d="M1456 358l54 17" stroke="#ff0000" strokeWidth="1.400" />
    <path d="M1528 382l-21.500-3 3-8.500 5 1z" fill="#ff0000" />
    <path d="M1428 358l-53 17" stroke="#0000ff" strokeWidth="1.400" />
    <path d="M1355.500 382.500l21-3.500-.5-7.500-5.500-.5z" fill="#0000ff" />
    <Label x={1415} y={531} w={38}>camera1</Label>
    <rect x="1441" y="538" width="2" height="1" fill="#fff" />
    <VL x={1012} y0={501} y1={513} c="#00cc00" />
    <path d="M1012 513l8 2" stroke="#e00000" />
    <path d="M1012 513l-8 3" stroke="#0000ff" />
    <Ax x={1012} y={498.5} c="#00ee00">y</Ax>
    <Ax x={1022.5} y={515.5} c="#e00000">x</Ax>
    <Ax x={1001} y={517} c="#0000ff">z</Ax>
  </svg>
);

const FrontView = () => (
  <svg width="911" height="370" viewBox="69 583 911 370" fill="none">
    <rect x="69" y="583" width="911" height="370" fill="#5c5c5c" />
    <HL y={767} x0={69} x1={980} w={2} />
    <rect x="297" y="583" width="446" height="370" fill="#c2c2c2" />
    {[210, 365, 674, 829].map((x) => <VL key={x} x={x} y0={583} y1={953} />)}
    {[613, 923].map((y) => <HL key={y} y={y} x0={69} x1={980} />)}
    <VL x={297} y0={583} y1={953} c="#ffffff" />
    <VL x={742} y0={583} y1={953} c="#ffffff" />
    <VL x={519} y0={583} y1={953} />
    <VL x={520} y0={583} y1={953} c="#ffffff" />
    <g stroke={CAN} strokeWidth="1.500">
      <path d="M478.500 674h83.200v3.700l10 20V848l-10.300 10-1.500 4.500h-79.500l-1.500-4.500-10.300-10V697.700l9.800-20z" />
      <path d="M478.500 674h83.500" strokeWidth="2" />
      <path d="M479 677.700h82.500M469 697.500h102.500M469 848h102.500" strokeWidth="1.300" />
      <path d="M470 862.700h9M563 862.700h9" strokeDasharray="3 1.500" strokeWidth="1.200" />
    </g>
    <HL y={767} x0={298} x1={742} />
    <HL y={768} x0={298} x1={742} c={GREEN} />
    <circle cx="520.500" cy="768.500" r="4" stroke="#2d4a3a" strokeWidth="1.300" strokeDasharray="2 1" />
    <path d="M520 768L892 583" stroke={NAVY} strokeWidth="1.100" shapeRendering="crispEdges" />
    <rect x="579.500" y="692.500" width="16" height="16" fill="#8080ff" fillOpacity=".35" stroke="#6060ff" />
    <rect x="510.500" y="758.500" width="20" height="20" stroke="#ffff80" />
    <HL y={768} x0={540} x1={610} c="#ff0000" />
    <path d="M610 763.500l22 4.700-22 4.500z" fill="#ff0000" />
    <VL x={520} y0={678} y1={748} c="#00ff00" />
    <path d="M520 658l-4.500 20h9z" fill="#00ff00" />
    <Label x={500} y={945} w={39}>front -Z</Label>
    <VL x={520} y0={930} y1={953} c="#ffffff" />
    <HL y={927} x0={95} x1={108} c="#e00000" />
    <Ax x={94.5} y={911} c="#00ee00">y</Ax>
    <Ax x={94.5} y={927} c="#0000c0">z</Ax>
    <Ax x={110.5} y={927} c="#e00000">x</Ax>
    <VL x={94} y0={914} y1={928} c="#00ee00" />
  </svg>
);

const SideView = () => (
  <svg width="910" height="370" viewBox="987 583 910 370" fill="none">
    <rect x="987" y="583" width="910" height="370" fill="#5c5c5c" />
    <HL y={769} x0={987} x1={1897} w={2} />
    <rect x="1223" y="583" width="421" height="370" fill="#c2c2c2" />
    {[994, 1140, 1287, 1579, 1725, 1871].map((x) => <VL key={x} x={x} y0={583} y1={953} />)}
    {[623, 915].map((y) => <HL key={y} y={y} x0={987} x1={1897} />)}
    <VL x={1223} y0={583} y1={953} c="#ffffff" />
    <VL x={1643} y0={583} y1={953} c="#ffffff" />
    <HL y={769} x0={1224} x1={1643} c={GREEN} />
    <HL y={770} x0={1224} x1={1643} />
    <VL x={1432} y0={583} y1={953} />
    <g stroke={CAN}>
      <path d="M1396 686l-10 17v142l9 8M1472.500 686l9 17v142l-9.500 8" strokeWidth="2.400" />
      <path d="M1394.500 681h78.500v5l-4 1h-3l-2-2h-61l-2 2h-4l-2.500-1z" strokeWidth="1.500" />
      <path d="M1421 683h41" strokeWidth="3" />
      <path d="M1403 685h63" strokeWidth="1.400" />
      <path d="M1395 852.500h78" strokeWidth="2.200" />
      <path d="M1394.500 853l2 5.500h75l2-5.500M1402 853l-3 5M1466 853l3 5" strokeWidth="1.500" />
      <path d="M1385 859h9M1474 859h9M1477 681h7" strokeDasharray="3 1.500" strokeWidth="1.100" strokeOpacity=".6" />
    </g>
    <VL x={1433} y0={583} y1={953} c="#ffffff" />
    <circle cx="1433.500" cy="769.500" r="4" stroke="#2d4a3a" strokeWidth="1.300" strokeDasharray="2 1" />
    <path d="M1433 769.500L1060.400 583" stroke={NAVY} strokeWidth="1.100" shapeRendering="crispEdges" />
    <rect x="1357.500" y="694.500" width="16" height="16" fill="#ff8070" fillOpacity=".25" stroke="#ff6055" />
    <rect x="1423.500" y="759.500" width="20" height="20" stroke="#ffff80" />
    <HL y={769} x0={1343} x1={1413} c="#0000ff" />
    <path d="M1343 765l-21 4.500 21 5z" fill="#0000ff" />
    <VL x={1433} y0={680} y1={750} c="#00ff00" />
    <path d="M1433.500 658l-4.700 21.500h9.400z" fill="#00ff00" />
    <Label x={1420} y={945} w={34}>side -X</Label>
    <Ax x={1012} y={911} c="#00ee00">y</Ax>
    <Ax x={996} y={927} c="#0000ff">z</Ax>
    <Ax x={1012} y={927} c="#e00000">x</Ax>
    <VL x={1012} y0={914} y1={928} c="#00ee00" />
    <HL y={927} x0={998} x1={1012} c="#0000ff" />
  </svg>
);

/* ---------- left toolbox ---------- */
const Quad = ({ x, y, f = false, h = 12 }: { x: number; y: number; f?: boolean; h?: number }) => (
  <>
    <rect x={x + 0.5} y={y + 0.5} width={12} height={h} fill={f ? W : "none"} stroke={W} />
    {f ? (
      <path d={`M${x + 2.5} ${y + h / 2 + 0.5}l4-3 4 3-4 3z`} fill={DK} />
    ) : (
      <path d={`M${x + 3} ${y + h / 2 + 0.5}h7M${x + 6.5} ${y + h / 2 - 3}v7`} stroke={W} />
    )}
  </>
);
const Toolbox = () => (
  <div className="flex w-[44px] shrink-0 flex-col items-center">
    <div className="mt-[3px] h-[5px] w-[40px] bg-[radial-gradient(circle,#8a8a8a_0.6px,transparent_0.9px)] bg-[length:3px_3px]" />
    <div className="mt-[4px] flex flex-col gap-[1px]">
      <I36><path d="M12 6v21l4.500-4L20 30l4-2-3.500-6.500H27z" fill="#c8c8c8" stroke={DK} strokeWidth=".6" /></I36>
      <I36><path d="M13 27C3 28 3 20 9 14S25 4 26 10s-4 9-7 11" stroke={T} strokeWidth="1.800" strokeDasharray="4 2" /><path d="M16 13v16l4-3 2.500 5.500 3-1.500-2.500-5h5z" fill="#c8c8c8" /></I36>
      <I36><path d="M10 11c-6 1-2 9 5 14s13 5 10-2M10 11l5 2" stroke={T} strokeWidth="1.800" strokeDasharray="4 2" /><path d="M30 6l-8.500 9" stroke={W} strokeWidth="3" /><path d="M21 14l2.500 2.500q0 5-9.500 5.500 3-6 7-8z" fill="#c8c8c8" /></I36>
      <div className="bg-[#5285a6]">
        <I36><rect x="11.500" y="11.500" width="13" height="13" fill="#c8c8c8" stroke="#333" /><path d="M18 3.500l4.500 4.500h-9zM18 32l4.500-4.500h-9zM3.500 18L8 13.500v9zM32.500 18L28 13.500v9z" fill={T} stroke="#333" strokeWidth=".9" /></I36>
      </div>
      <I36><path d="M17 30A12.500 12.500 0 1 1 29.500 18" stroke={T} strokeWidth="1.600" /><path d="M26 17.500h7L29.500 23z" fill={T} /><path d="M17.500 10.500l7 7-7 7-7-7z" fill="#c8c8c8" /></I36>
      <I36><path d="M6.500 18V6.500h23v23H19" stroke={T} strokeWidth="1.600" strokeDasharray="2 2" /><rect x="6" y="19" width="11" height="11" fill="#c8c8c8" /><path d="M14.500 16.500h5v5" stroke={T} strokeWidth="1.600" /></I36>
    </div>
    <div className="mt-[79px] h-[2px] w-[36px] bg-[#8f8f8f]" />
    <svg width="28" height="28" viewBox="0 0 28 28" fill="none" className="mt-[9px]"><path d="M0 0h28v28H0z" fill="#c4c4c4" /><path d="M2.500 2.500h23v23h-23z" stroke={DK} /><path d="M14 7.500l4 3-4 3-4-3zM14 15.500l4 3-4 3-4-3zM9 11.500l4 3-4 3-4-3zM19 11.500l4 3-4 3-4-3z" fill={DK} /></svg>
    <svg width="28" height="28" viewBox="0 0 28 28" fill="none" className="mt-[9px]"><Quad x={0} y={0} /><Quad x={15} y={0} f /><Quad x={0} y={15} /><Quad x={15} y={15} /></svg>
    <svg width="28" height="28" viewBox="0 0 28 28" fill="none" className="mt-[9px]"><Quad x={0} y={0} h={27} /><Quad x={15} y={0} f h={27} /></svg>
    <svg width="28" height="28" viewBox="0 0 28 28" fill="none" className="mt-[9px]"><rect x=".5" y=".5" width="27" height="27" stroke={W} /><path d="M7.500 8v15M9 5.500h10M12 11.500h11M12 17h6M12 23h7M7.500 11.500h5M7.500 17h5M7.500 23h5" stroke={W} /><path d="M6 4h3v3H6zM12 10h3v3h-3zM12 15.500h3v3h-3zM12 21.500h3v3h-3z" fill="#c8c8c8" /></svg>
    <div className="mt-[9px] h-[2px] w-[36px] bg-[#8f8f8f]" />
    <svg width="36" height="36" viewBox="0 0 36 36" fill="none" className="mt-[5px]"><path d="M6 .5H.5v35H6M30 .5h5.500v35H30" stroke="#22c322" /><circle cx="16" cy="16" r="8" stroke="#c8c8c8" strokeWidth="1.800" /><path d="M21 22l7.500 7" stroke="#c8c8c8" strokeWidth="3.200" /></svg>
    <svg width="34" height="31" viewBox="0 0 34 31" className="mt-auto mb-[5px]">
      <path d="M1 .5h9l7.500 18L24 .5h9v30h-7.500V13L20 25h-5.500L8.500 13v17.500H1z" fill="#1fa5a8" />
      <path d="M1 .5h9l8 19-3.500 6z" fill="#6cc3c6" />
      <path d="M24 .5h9L20 25h-4z" fill="#2fc0c2" />
      <path d="M1 30.500V9l6 8-1 10z" fill="#0f8388" />
      <path d="M33 .5L26 15v15.500h7z" fill="#1b9599" />
    </svg>
  </div>
);

const VTab = ({ h, children, left = false }: { h: string; children: string; left?: boolean }) => (
  <div className={"flex w-[18px] items-center justify-center rounded-l-[4px] border border-r-0 border-[#2e2e2e] bg-[#3a3a3a] text-[#8c8c8c] " + (left ? "pr-[4px] " : "") + h}>
    <span className="rotate-180 whitespace-nowrap [writing-mode:vertical-rl]">{children}</span>
  </div>
);

/* ---------- time slider ---------- */
const ticks = Array.from({ length: 24 }, (_, i) => (i + 1) * 5);
const playIcons = [
  <I20><path d="M2 4v12" stroke={W} strokeWidth="1.500" /><path d="M10.500 5v10L4 10zM18 5v10l-6.500-5z" fill={W} /></I20>,
  <I20><path d="M5 4v12" stroke={W} strokeWidth="1.500" /><path d="M15.500 4.500v11L7 10z" fill={W} /></I20>,
  <I20><path d="M5 1v18" stroke={W} /><path d="M3.500 3.500h3v13h-3z" fill="#e08040" /><path d="M16.500 4.500v11L8 10z" fill={W} /></I20>,
  <I20><path d="M16.500 3v14.500L3.500 10z" fill={W} /></I20>,
  <I20><path d="M3.500 3v14.500l13-7.500z" fill={W} /></I20>,
  <I20><path d="M15 1v18" stroke={W} /><path d="M13.500 3.500h3v13h-3z" fill="#e08040" /><path d="M3.500 4.500v11L12 10z" fill={W} /></I20>,
  <I20><path d="M15 4v12" stroke={W} strokeWidth="1.500" /><path d="M4.500 4.500v11L13 10z" fill={W} /></I20>,
  <I20><path d="M18 4v12" stroke={W} strokeWidth="1.500" /><path d="M2 5v10l6.500-5zM9.500 5v10l6.500-5z" fill={W} /></I20>,
];

const TimeSlider = () => (
  <div className="flex h-[52px] items-start border-t-0 pt-[4px]">
    <div className="w-[13px] pl-[2px]"><Grip h="h-[45px]" /></div>
    <div className="relative flex h-[44px] w-[1612px] overflow-hidden border-b-[3px] border-[#353535] bg-[#2b2b2b] text-[#7d7d7d]">
      <div className="absolute top-0 left-[9px] flex h-[44px] w-[11px] items-end justify-center bg-[#4e4e4e] pb-[4px] leading-[16px] text-white">1</div>
      {ticks.map((t, i) => (
        <div key={t} className="absolute top-0 h-full" style={{ left: 60.2 + i * 66.5 }}>
          <span className="absolute top-[-2px] left-[4px] leading-[13px] tracking-[0.2px]">{t}</span>
          <div className="absolute top-[13px] h-[27px] w-[2px] bg-[#777777]" />
        </div>
      ))}
    </div>
    <div className="mt-[6px] ml-[7px] flex h-[18px] w-[88px] items-center rounded-[2px] bg-[#2b2b2b] pt-px pl-[6px] text-[#d2d2d2]">1</div>
    <div className="mt-[4px] ml-[6px] flex">
      <Cells items={playIcons} w="w-[23px]" />
    </div>
  </div>
);

const Field = ({ children, ml }: { children: string; ml: string }) => (
  <div className={"flex h-[23px] w-[88px] shrink-0 items-center rounded-[2px] bg-[#2b2b2b] pl-[6px] " + ml}>{children}</div>
);
const HollowTri = () => (
  <svg width="10" height="7" viewBox="0 0 10 7" className="mb-[4px]"><path d="M.8.8h8.400L5 6z" fill="#555" stroke="#a0a0a0" /></svg>
);

const RangeSlider = () => (
  <div className="flex h-[33px] items-center text-[#d2d2d2]">
    <div className="w-[14px] shrink-0 pl-[2px]"><Grip h="h-[29px]" /></div>
    <Field ml="">1</Field>
    <Field ml="ml-[8px]">1</Field>
    <div className="ml-[7px] flex h-[23px] w-[914px] shrink-0 items-center bg-[#373737] pb-[1px] pl-[5px]">
      <div className="flex h-[18px] w-[553px] items-center rounded-[3px] bg-[#5d5d5d] px-[3px]">
        <div className="h-[12px] w-[13px] rounded-[3px] bg-[#919191]" />
        <span className="ml-[4px] pt-px">1</span>
        <span className="ml-auto pt-px">120</span>
        <div className="ml-[5px] h-[12px] w-[13px] rounded-[3px] bg-[#919191]" />
      </div>
    </div>
    <Field ml="ml-[7px]">120</Field>
    <Field ml="ml-[8px]">200</Field>
    <Sep w="w-[12px]" />
    <div className="flex w-[32px] justify-center">
      <I20><path d="M5 1h9v17l-4.500-4L5 18z" fill="#e0703c" /><path d="M14 1v7.500M10.500 5H18" stroke="#c8c8c8" strokeWidth="1.700" /></I20>
    </div>
    <Sep w="w-[11px]" />
    <div className="flex w-[26px] justify-center"><HollowTri /></div>
    <div className="flex h-[23px] w-[102px] items-center rounded-[3px] border-2 border-[#3b3b3b] pl-[4px] whitespace-nowrap">No Character Set</div>
    <div className="flex w-[27px] justify-center"><HollowTri /></div>
    <div className="flex h-[23px] w-[102px] items-center rounded-[3px] border-2 border-[#3b3b3b] pl-[4px] whitespace-nowrap">No Anim Layer</div>
    <Sep w="w-[22px]" />
    <div className="mb-[4px] ml-[2px] flex h-[19px] w-[101px] items-center rounded-[2px] bg-[#5d5d5d]">
      <span className="flex-1 pl-[3px]">24 fps</span>
      <div className="flex h-full w-[20px] items-center justify-center border-l-2 border-[#4f4f4f]"><Tri c={W} /></div>
    </div>
    <div className="mb-[4px] ml-[12px]"><I20><path d="M5 13.500q-3 0-3-3.500t3-3.500h8M14 6.500q4 0 4 3.500t-3 3.500H7" stroke={W} strokeWidth="1.800" /><path d="M11 3l4 3.500-4 3zM9 10.500L5 14l4 3z" fill={W} /></I20></div>
    <div className="mb-[2px] ml-[8px] flex h-[23px] w-[23px] items-center justify-center bg-[#5285a6]">
      <I20><rect x="1.500" y="3.500" width="17" height="14" fill="#e0803c" stroke="#333" strokeWidth=".8" /><path d="M2 5.300h16M2 15.800h16" stroke="#40352c" strokeWidth="1.300" strokeDasharray="1.500 1.300" /><path d="M4 8h12v5.500H4z" fill="#d0d0d0" stroke="#333" strokeWidth=".8" /><path d="M8 8v5.500M12 8v5.500" stroke="#333" /><path d="M13 0l6.500 4.500L13 9z" fill="#d0d0d0" stroke="#444" strokeWidth=".6" /></I20>
    </div>
    <Sep w="w-[21px]" />
    <div className="mb-[4px] ml-[1px] flex items-center">
      <I20><path d="M1 7h3.500L10 2.500v15L4.500 13H1z" fill={W} /><path d="M12 7q2 3 0 6M14 5q3.500 5 0 10M16.500 3.500q4.500 6.500 0 13" stroke={W} strokeWidth="1.100" /></I20>
      <div className="ml-[9px]"><I20><path d="M3 8a7.500 7.500 0 0 1 13-2.500M17 12a7.500 7.500 0 0 1-13 2.500M6 3.500q4-3 8 0" stroke={W} strokeWidth="1.400" /><path d="M18 2v5.500h-5zM2 18v-5.500h5z" fill={W} /><path d="M10 5.500v9" stroke="#e0803c" strokeWidth="2.400" /></I20></div>
      <div className="ml-[9px]"><I20><GearShape cx={5.5} cy={5} r={3} c={W} /><circle cx="16" cy="4.500" r="2" fill="#e0803c" /><path d="M9 9l3-2 3 1.500 1 2.500h3M13.500 8l-2 5 3.500 2-.5 4M11.500 13l-2 3.500H6" stroke="#e0803c" strokeWidth="1.900" /></I20></div>
    </div>
  </div>
);

const HelpLine = () => (
  <div className="flex h-[32px] items-center text-[#e8e8e8]">
    <div className="w-[14px] shrink-0 pl-[2px]"><Grip h="h-[26px]" /></div>
    <div className="flex h-[16px] w-[16px] shrink-0 items-center justify-center rounded-full bg-[#83b440] text-[13px] font-extrabold text-[#2f3a20]">?</div>
    <div className="ml-[8px] h-[32px] w-[851px] shrink-0 overflow-hidden border-r-2 border-[#393939] text-[11px] leading-[31px] font-medium tracking-[-0.36px] whitespace-nowrap">
      Move Tool: Use manipulator to move object(s). Ctrl+middle-drag to move components along normals. Shift+drag manipulator axis or plane handles to extrude components or
    </div>
    <div className="ml-[5px] w-[22px]"><Grip h="h-[26px]" /></div>
    <span className="w-[35px] font-medium">MEL</span>
    <div className="h-[22px] w-[213px] shrink-0 rounded-[2px] bg-[#2b2b2b]" />
    <div className="flex w-[8px] shrink-0 justify-center"><div className="h-[9px] w-px bg-[repeating-linear-gradient(#8a8a8a_0_1px,transparent_1px_3px)]" /></div>
    <div className="h-[24px] w-[715px] shrink-0 bg-[#2b2b2b]" />
    <svg width="20" height="20" viewBox="0 0 20 20" className="ml-[5px]">
      <path d="M1 1h18v18H1z" fill="#c8c8c8" />
      <path d="M3 2.300h1.500v1.500H3zM5.500 2.300H7v1.500H5.500zM8 2.300h1.500v1.500H8z" fill="#333" />
      <path d="M1 4.700h18" stroke="#333" />
      <text x="3.500" y="15" fontSize="10" fontWeight="700" fill="#333" fontFamily="Noto Sans" textLength="13">{"{;}"}</text>
    </svg>
  </div>
);

export default function App() {
  return (
    <div className="flex h-[1080px] w-[1920px] flex-col overflow-hidden bg-[#444444] font-['Noto_Sans','Open_Sans',sans-serif] text-[11.3px] leading-none select-none">
      <MenuBar />
      <StatusLine />
      <div className="h-[2px] bg-[#393939]" />
      <Shelf />
      <div className="h-[2px] bg-[#393939]" />
      <div className="flex h-[830px]">
        <Toolbox />
        <div className="flex w-[21px] shrink-0 flex-col items-end gap-[2px] bg-[#373737] pt-[2px]">
          <VTab h="h-[65px]" left>Outliner</VTab>
          <VTab h="h-[92px]" left>Tool Settings</VTab>
        </div>
        <div className="ml-[3px] flex w-[913px] shrink-0 flex-col gap-[4px] pt-[3px]">
          <Panel><TopView /></Panel>
          <Panel><FrontView /></Panel>
        </div>
        <div className="flex w-[5px] shrink-0 flex-col items-center pt-[554px]">
          <div className="h-[136px] w-px bg-[repeating-linear-gradient(#8a8a8a_0_1px,transparent_1px_3px)]" />
        </div>
        <div className="relative flex w-[912px] shrink-0 flex-col gap-[4px] pt-[3px]">
          <Panel active lit><CamView /></Panel>
          <div className="absolute top-[415px] left-[-308px] h-px w-[607px] bg-[repeating-linear-gradient(90deg,#8a8a8a_0_1px,transparent_1px_3px)]" />
          <Panel cam={false} full><SideView /></Panel>
        </div>
        <div className="ml-[3px] flex flex-1 flex-col items-end gap-[2px] bg-[#373737] pt-[2px]">
          <VTab h="h-[164px]">Channel Box / Layer Editor</VTab>
          <VTab h="h-[105px]">Attribute Editor</VTab>
          <VTab h="h-[112px]">Modeling Toolkit</VTab>
        </div>
      </div>
      <div className="mb-[1px] h-[2px] bg-[#373737]" />
      <TimeSlider />
      <div className="h-[2px] bg-[#393939]" />
      <RangeSlider />
      <div className="h-[2px] bg-[#393939]" />
      <HelpLine />
    </div>
  );
}
